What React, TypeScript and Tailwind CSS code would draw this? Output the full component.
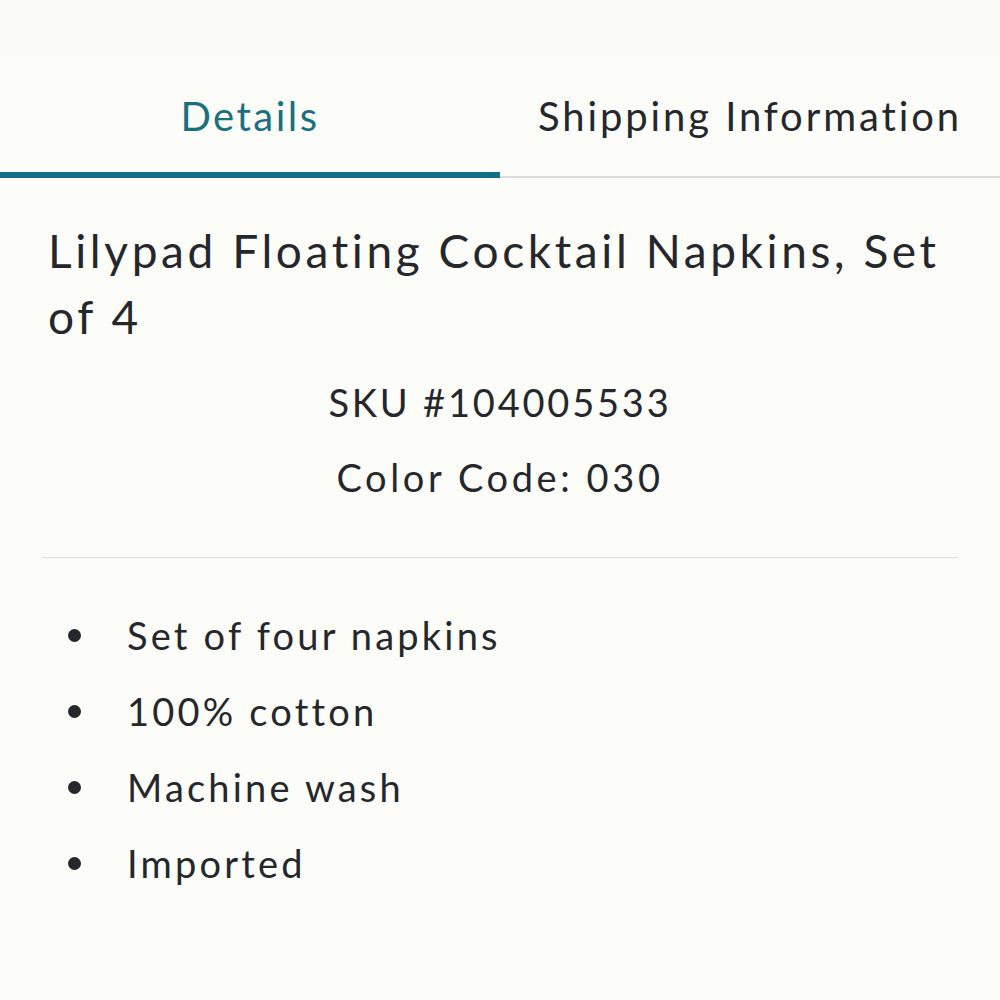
import React from 'react';

const bullets = ['Set of four napkins', '100% cotton', 'Machine wash', 'Imported'];

function App() {
    return (
        <div className="min-h-screen w-full bg-[#fcfdf8] text-[#25272d]" style={{ fontFamily: 'Lato, "Noto Sans", sans-serif' }}>
            <div className="h-[60px] bg-gradient-to-b from-[#f9faf6] to-[#fbfcf7]"></div>
            <div className="flex flex-row">
                <div className="flex-1 flex flex-col items-center">
                    <div className="h-[112px] flex items-center text-[40px] text-[#1a6f80] tracking-[2.5px]">Details</div>
                    <div className="w-full h-[6px] bg-[#137187]"></div>
                </div>
                <div className="flex-1 flex flex-col items-center">
                    <div className="h-[112px] flex items-center text-[40px] tracking-[2.9px]">Shipping Information</div>
                    <div className="w-full h-[6px] flex flex-col justify-end">
                        <div className="h-[2px] bg-[#dcdcdc]"></div>
                    </div>
                </div>
            </div>
            <div className="px-[48px] pt-[40px]">
                <h1 className="text-[46px] leading-[66px] tracking-[3.6px]">Lilypad Floating Cocktail Napkins, Set of 4</h1>
                <div className="flex flex-col items-center text-[38px] tracking-[2.8px] mt-[24px] gap-[18px]">
                    <div>SKU #104005533</div>
                    <div className="tracking-[3.6px]">Color Code: 030</div>
                </div>
            </div>
            <div className="mx-[42px] mt-[51px] h-[1px] bg-[#dedede]"></div>
            <ul className="px-[68px] pt-[49px] flex flex-col gap-[20px]">
                {bullets.map(b => (
                    <li key={b} className="flex flex-row items-center text-[38px] tracking-[3.2px] h-[56px]">
                        <span className="w-[13px] h-[13px] rounded-full bg-[#25272d] mr-[46px]"></span>
                        <span>{b}</span>
                    </li>
                ))}
            </ul>
        </div>
    );
}

export default App;
